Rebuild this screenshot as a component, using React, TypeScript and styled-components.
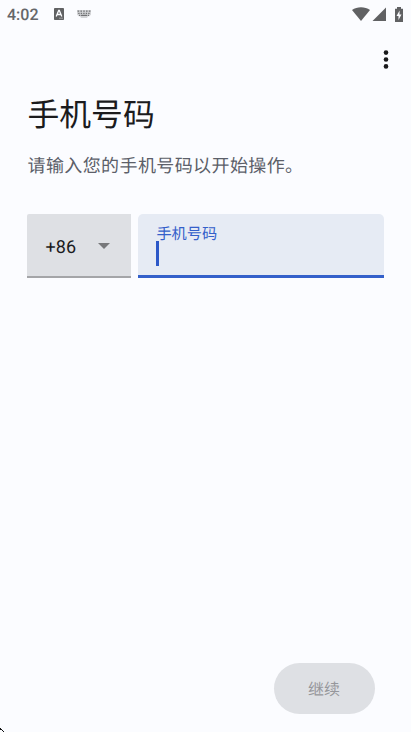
import React from "react";
import styled, { createGlobalStyle } from "styled-components";

const GlobalStyle = createGlobalStyle`
  *, *::before, *::after { box-sizing: border-box; }
  html, body, #root { height: 100%; }
  body {
    margin: 0;
    background: #fbfcff;
    font-family: Roboto, "Noto Sans CJK SC", sans-serif;
    text-rendering: geometricPrecision;
    overflow: hidden;
  }
  button { text-rendering: inherit; }
`;

const Screen = styled.div`
  position: relative;
  display: flex;
  flex-direction: column;
  width: 411px;
  height: 732px;
  background: #fbfcff;
  color: #1b1b1d;
`;

const StatusBar = styled.header`
  display: flex;
  align-items: center;
  height: 28px;
  padding: 0 7px;
  color: #66676a;
  svg { display: block; flex: none; }
`;

const Clock = styled.span`
  width: 47px;
  font-size: 16px;
  font-weight: 500;
  line-height: 28px;
  padding-top: 1px;
`;

const Notifications = styled.div`
  display: flex;
  align-items: center;
  gap: 13px;
  flex: 1;
`;

const Indicators = styled.div`
  display: flex;
  align-items: center;
  height: 14px;
  margin-right: 1px;
`;

const Toolbar = styled.div`
  display: flex;
  justify-content: flex-end;
  height: 64px;
  padding: 21px 22px 0 0;
`;

const MenuButton = styled.button`
  display: flex;
  width: 6px;
  height: 22px;
  padding: 0;
  border: 0;
  background: none;
`;

const Content = styled.main`
  flex: 1;
  padding: 0 27px;
`;

const Title = styled.h1`
  margin: 0;
  padding: 1px 0 0 0.5px;
  font-size: 31.8px;
  font-weight: 400;
  line-height: 44px;
`;

const Subtitle = styled.p`
  margin: 17px 0 0;
  padding-left: 0.5px;
  font-size: 18px;
  line-height: 26px;
  letter-spacing: 0.4px;
  color: #5c5f69;
  white-space: nowrap;
`;

const Fields = styled.div`
  display: grid;
  grid-template-columns: 104px 246px;
  gap: 7px;
  margin-top: 34px;
`;

const CountryField = styled.button`
  display: flex;
  align-items: center;
  height: 64px;
  padding: 1px 21px 0 18.5px;
  border: 0;
  border-bottom: 2px solid #a4a5a8;
  border-radius: 2px 0 0 0;
  background: #dee0e4;
  color: #1b1b1d;
  font: 400 18px Roboto, sans-serif;
  letter-spacing: 0.1px;
  justify-content: space-between;
`;

const CountryCode = styled.span`
  padding-top: 3px;
`;

const PhoneField = styled.label`
  display: block;
  height: 64px;
  padding: 9px 18px 0;
  border-radius: 5px 5px 0 0;
  border-bottom: 3px solid #3460ca;
  background: #e6ebf4;
`;

const FieldLabel = styled.span`
  display: block;
  height: 18px;
  padding-left: 0.4px;
  font-size: 15.2px;
  line-height: 23px;
  color: #3460ca;
`;

const Caret = styled.span`
  display: block;
  width: 3px;
  height: 25px;
  background: #2c58c8;
`;

const Footer = styled.footer`
  display: flex;
  justify-content: flex-end;
  padding: 0 36px 18px 0;
`;

const ContinueButton = styled.button`
  width: 101px;
  height: 51px;
  padding: 0 1px 2px 0;
  border: 0;
  border-radius: 26px;
  background: #dee0e4;
  color: #96979b;
  font: 400 16px Roboto, "Noto Sans CJK SC", sans-serif;
`;

const CornerMark = styled.svg`
  position: absolute;
  left: 0;
  bottom: 0;
`;

const keys = [0, 1, 2, 3, 4];

export default function App() {
  return (
    <>
      <GlobalStyle />
      <Screen>
        <StatusBar>
          <Clock>4:02</Clock>
          <Notifications>
            <svg width="10" height="12" viewBox="0 0 10 12">
              <rect width="10" height="12" rx="0.8" fill="#606163" />
              <path d="M2.2 8.5 4.7 2.5h.6l2.5 6M3.2 6.5h3.6" fill="none" stroke="#fbfcff" strokeWidth="1.3" />
              <path d="M5.5 10.2h1m1 0h1" stroke="#fbfcff" strokeWidth="0.8" />
            </svg>
            <svg width="14" height="8" viewBox="0 0 14 8">
              <path d="M0 0h14v4.5l-1.5 1.7H11L10 8H4L3 6.2H1.5L0 4.5Z" fill="#d3d4d7" />
              {keys.map((k) => (
                <path key={k} d={`M${0.6 + k * 2.8} 1.1h1.6M${1.2 + k * 2.5} 3.3h1.4`} stroke="#727376" strokeWidth="1.2" />
              ))}
              <path d="M2 5.4h1.3M4 5.4h6M10.7 5.4h1.3" stroke="#727376" strokeWidth="1.2" />
            </svg>
          </Notifications>
          <Indicators>
            <svg width="18" height="14" viewBox="0 0 18 14">
              <path d="M0 3C5-.8 13-.8 18 3L9 14Z" fill="#606163" />
            </svg>
            <svg width="17" height="14" viewBox="0 0 17 14">
              <path d="M16 .5V14H2.5Z" fill="#606163" />
            </svg>
            <svg width="16" height="15" viewBox="0 0 16 15">
              <path d="M8 1.7h2V0h4v1.7h2V15H8Z" fill="#606163" />
              <path d="M12.6 3.5 9.5 9h2v3.9l3-5.5h-2Z" fill="#fbfcff" />
            </svg>
          </Indicators>
        </StatusBar>
        <Toolbar>
          <MenuButton aria-label="更多选项">
            <svg width="6" height="22" viewBox="0 0 6 22">
              <circle cx="3" cy="3.6" r="2.3" fill="#19191b" />
              <circle cx="3" cy="10.5" r="2.3" fill="#19191b" />
              <circle cx="3" cy="17.4" r="2.3" fill="#19191b" />
            </svg>
          </MenuButton>
        </Toolbar>
        <Content>
          <Title>手机号码</Title>
          <Subtitle>请输入您的手机号码以开始操作。</Subtitle>
          <Fields>
            <CountryField>
              <CountryCode>+86</CountryCode>
              <svg width="12" height="6" viewBox="0 0 12 6">
                <path d="M0 0h12L6 6Z" fill="#77787a" />
              </svg>
            </CountryField>
            <PhoneField>
              <FieldLabel>手机号码</FieldLabel>
              <Caret />
            </PhoneField>
          </Fields>
        </Content>
        <Footer>
          <ContinueButton>继续</ContinueButton>
        </Footer>
        <CornerMark width="5" height="4" viewBox="0 0 5 4">
          <path d="M0 0h1v1h1v1H0ZM2 2h1v1H2ZM3 3h1v1H3Z" fill="#111" />
        </CornerMark>
      </Screen>
    </>
  );
}
